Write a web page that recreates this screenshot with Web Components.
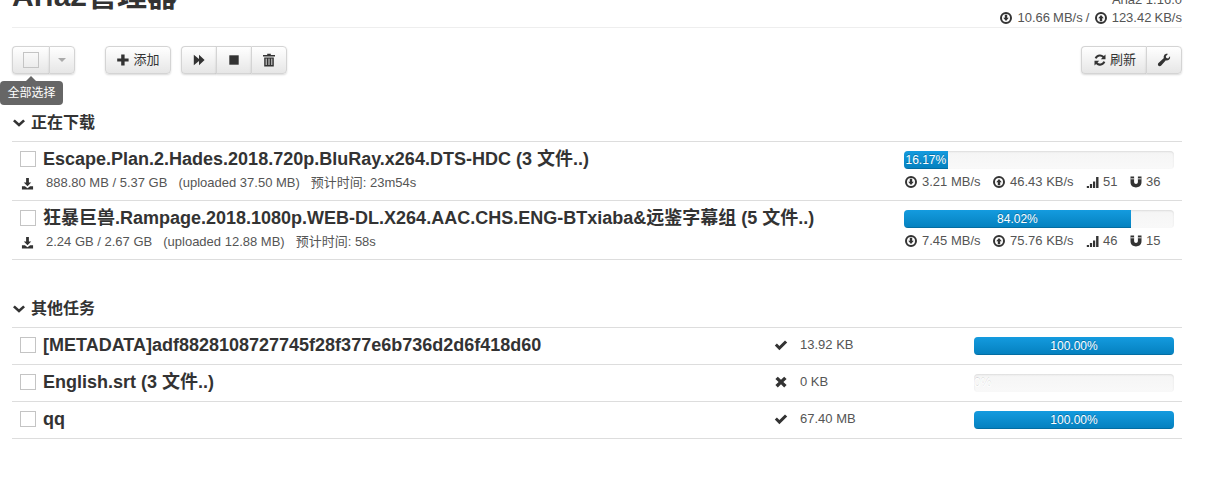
<!DOCTYPE html>
<html lang="zh">
<head>
<meta charset="utf-8">
<title>Aria2管理器</title>
<style>
html, body { margin: 0; height: 492px; overflow: hidden; background: #fff; }
body { font: 13px/18px "Liberation Sans", "Noto Sans CJK SC", sans-serif; color: #333; }
</style>
</head>
<body>
<a2-app></a2-app>
<script>
const ICONS = {
    down: '<circle cx="7" cy="7" r="5" fill="none" stroke="currentColor" stroke-width="2"/><path d="M5.800 3.800h2.400v3h1.600L7 10 4.200 6.800h1.600z"/>',
    up: '<circle cx="7" cy="7" r="5" fill="none" stroke="currentColor" stroke-width="2"/><path d="M5.800 10.200h2.400v-3h1.600L7 4 4.200 7.200h1.600z"/>',
    download: '<path d="M5.500 1h3v5h2.500L7 10 3 6h2.500z"/><path d="M1 10h3.200L7 12l2.800-2H13v3.400H1z"/>',
    signal: '<path d="M.8 11h2.200v2H.8zM3.900 9h2.200v4H3.900zM7 6.500h2.200V13H7zM10.100 2h2.400v11h-2.400z"/>',
    magnet: '<path d="M1.500 1.500h3.600v5.600c0 2.600 3.800 2.600 3.800 0V1.500h3.600v5.800c0 6.900-11 6.900-11 0z"/><path d="M1.500 3.800h3.600M8.900 3.800h3.600" stroke="#fff" stroke-width=".8"/>',
    check: '<path d="M.8 7.600 2.900 5.500l2.500 2.500L11 2.400l2.200 2.200-7.800 7.700z"/>',
    remove: '<path d="M1.400 4 3.800 1.700 7 4.800l3.200-3.100 2.400 2.300L9.400 7l3.200 3.100-2.400 2.300L7 9.200l-3.200 3.200-2.400-2.300L4.600 7z"/>',
    plus: '<path d="M5.200 1.500h3.400v3.900h4v3.200h-4v3.900H5.200V8.600h-4V5.400h4z"/>',
    forward: '<path d="M1.800 1.700 7 6V1.700L12.600 7 7 12.300V8l-5.200 4.300z"/>',
    stop: '<path d="M2.300 2.300h9.400v9.400H2.300z"/>',
    trash: '<path d="M5.200 .8h3.600v1.100H13v1.500H1V1.900h4.200zM2.200 4.400h9.600v9H2.200z"/><path d="M4.200 5.600v6.400M7 5.600v6.400M9.800 5.600v6.400" stroke="#f2f2f2" stroke-width=".9"/>',
    refresh: '<path d="M7 1.500a5.500 5.500 0 0 1 3.900 1.600L12.500 1.500v4.700H7.800l1.700-1.700A3.500 3.500 0 0 0 3.700 5.700L1.700 5A5.500 5.500 0 0 1 7 1.500zM1.500 7.800h4.700L4.500 9.500a3.500 3.500 0 0 0 5.800-1.200l2 .7a5.500 5.500 0 0 1-9.200 1.900L1.500 12.500z"/>',
    wrench: '<path d="M13 3.300c.4 1.500-.1 3-1.500 3.700-.9.500-1.800.5-2.600.2L4 12.700c-.6.600-1.900.7-2.600 0-.7-.7-.6-1.900.1-2.600l5.400-5C6.500 4.200 6.600 3.200 7.100 2.400 7.900 1.100 9.400.600 10.900 1L8.800 3.200l.5 1.800 1.800.5z"/>',
    chevron: '<path d="M1 5.200 2.800 3.400 7 7.200l4.200-3.800L13 5.200 7 10.800z"/>'
};

class A2Icon extends HTMLElement {
    connectedCallback() {
        const size = this.getAttribute('size') || 14;
        this.attachShadow({ mode: 'open' }).innerHTML = `
            <style>
                :host { display: inline-flex; width: ${size}px; height: ${size}px; flex: none; }
                svg { width: 100%; height: 100%; fill: currentColor; }
            </style>
            <svg viewBox="0 0 14 14">${ICONS[this.getAttribute('name')]}</svg>`;
    }
}
customElements.define('a2-icon', A2Icon);

class A2Btn extends HTMLElement {
    constructor() {
        super();
        this.attachShadow({ mode: 'open' }).innerHTML = `
            <style>
                :host {
                    display: flex; align-items: center; justify-content: center; gap: 3px;
                    position: relative;
                    box-sizing: border-box; height: 28px;
                    border: 1px solid #d4d4d4; border-right-width: 0;
                    background: linear-gradient(#fff, #e6e6e6);
                    box-shadow: inset 0 1px 0 rgba(255,255,255,.2), 0 1px 2px rgba(0,0,0,.15);
                    color: #333; font-size: 13px;
                }
                :host(:first-child) { border-radius: 4px 0 0 4px; }
                :host(:last-child) { border-radius: 0 4px 4px 0; border-right-width: 1px; }
                :host(:only-child) { border-radius: 4px; }
            </style>
            <slot></slot>`;
    }
}
customElements.define('a2-btn', A2Btn);

class A2Group extends HTMLElement {
    constructor() {
        super();
        this.attachShadow({ mode: 'open' }).innerHTML = `
            <style>:host { display: flex; flex: none; }</style>
            <slot></slot>`;
    }
}
customElements.define('a2-group', A2Group);

class A2Check extends HTMLElement {
    constructor() {
        super();
        this.attachShadow({ mode: 'open' }).innerHTML = `
            <style>
                :host { display: block; box-sizing: border-box; width: 16px; height: 16px; flex: none;
                    border: 1px solid #c4c4c4; background: transparent; }
            </style>`;
    }
}
customElements.define('a2-check', A2Check);

class A2Tooltip extends HTMLElement {
    constructor() {
        super();
        this.attachShadow({ mode: 'open' }).innerHTML = `
            <style>
                :host { position: absolute; left: -13px; top: 29px; z-index: 2; display: block; }
                .arrow { width: 0; height: 0; margin-left: 26px; border: 5px solid transparent; border-top: 0;
                    border-bottom-color: #666; }
                .inner { box-sizing: border-box; width: 63px; height: 24px; border-radius: 4px; background: #666;
                    color: #fff; font-size: 12px; line-height: 24px; text-align: center; white-space: nowrap; }
            </style>
            <div class="arrow"></div>
            <div class="inner"><slot></slot></div>`;
    }
}
customElements.define('a2-tooltip', A2Tooltip);

class A2Progress extends HTMLElement {
    connectedCallback() {
        const value = parseFloat(this.getAttribute('value'));
        const label = this.getAttribute('label');
        const ghost = value === 0;
        this.attachShadow({ mode: 'open' }).innerHTML = `
            <style>
                :host { display: block; height: 18px; }
                .track { height: 18px; border-radius: 4px; overflow: hidden;
                    background: linear-gradient(#f5f5f5, #f9f9f9);
                    box-shadow: inset 0 1px 2px rgba(0,0,0,.1); }
                .bar { height: 18px; width: ${value}%; min-width: ${ghost ? 16 : 0}px; text-align: center;
                    color: #fff; font-size: 12px; line-height: 18px;
                    text-shadow: 0 -1px 0 rgba(0,0,0,${ghost ? '.12' : '.25'}); white-space: nowrap;
                    background: ${ghost ? 'none' : 'linear-gradient(#149bdf, #0480be)'};
                    box-shadow: ${ghost ? 'none' : 'inset 0 -1px 0 rgba(0,0,0,.15)'}; }
            </style>
            <div class="track"><div class="bar">${label}</div></div>`;
    }
}
customElements.define('a2-progress', A2Progress);

class A2Section extends HTMLElement {
    constructor() {
        super();
        this.attachShadow({ mode: 'open' }).innerHTML = `
            <style>
                :host { display: block; }
                h4 { display: flex; align-items: center; gap: 5px; margin: 0; height: 28px; padding-bottom: 4px;
                    font-size: 16px; line-height: 20px; font-weight: bold; color: #333; }
                .rows { border-top: 1px solid #ddd; }
            </style>
            <h4><a2-icon name="chevron" size="14"></a2-icon><span></span></h4>
            <div class="rows"><slot></slot></div>`;
    }
    connectedCallback() {
        this.shadowRoot.querySelector('span').textContent = this.getAttribute('heading');
    }
}
customElements.define('a2-section', A2Section);

class A2Task extends HTMLElement {
    connectedCallback() {
        const d = this.dataset;
        this.attachShadow({ mode: 'open' }).innerHTML = `
            <style>
                :host { display: grid; grid-template-columns: 1fr 270px; box-sizing: border-box;
                    height: 59px; padding: 9px 8px 0; border-bottom: 1px solid #ddd; color: #555; }
                .title { display: flex; align-items: center; gap: 7px; height: 18px; margin-top: -1px; }
                b { font-size: 18px; line-height: 18px; color: #333; white-space: nowrap; }
                .meta { display: flex; align-items: center; height: 18px; margin-top: 6px; padding-left: 1px; white-space: nowrap; }
                .meta a2-icon { margin-right: 12px; color: #333; }
                .meta span + span { margin-left: 11px; }
                .stats { display: grid; grid-template-columns: 88px 94px 43px 1fr; height: 18px; margin-top: 4px; white-space: nowrap; }
                .stats div { display: flex; align-items: center; gap: 4px; }
                .stats div:nth-child(n+3) { gap: 3px; }
                .stats a2-icon { color: #333; }
            </style>
            <div>
                <div class="title"><a2-check></a2-check><b>${d.name}</b></div>
                <div class="meta"><a2-icon name="download" size="13"></a2-icon><span>${d.size}</span><span>(uploaded ${d.sent})</span><span>预计时间: ${d.eta}</span></div>
            </div>
            <div>
                <a2-progress value="${d.pct}" label="${d.label}"></a2-progress>
                <div class="stats">
                    <div><a2-icon name="down"></a2-icon>${d.down}</div>
                    <div><a2-icon name="up"></a2-icon>${d.up}</div>
                    <div><a2-icon name="signal"></a2-icon>${d.seeds}</div>
                    <div><a2-icon name="magnet"></a2-icon>${d.peers}</div>
                </div>
            </div>`;
    }
}
customElements.define('a2-task', A2Task);

class A2Done extends HTMLElement {
    connectedCallback() {
        const d = this.dataset;
        this.attachShadow({ mode: 'open' }).innerHTML = `
            <style>
                :host { display: grid; grid-template-columns: 755px 199px 200px; align-items: center; box-sizing: border-box;
                    height: 37px; padding: 0 8px; border-bottom: 1px solid #ddd; color: #555; }
                .title { display: flex; align-items: center; gap: 7px; margin-top: -2px; }
                b { font-size: 18px; line-height: 18px; color: #333; white-space: nowrap; }
                .state { display: flex; align-items: center; gap: 12px; white-space: nowrap; margin: -2px 0 0 -1px; }
                .state a2-icon { color: #333; }
            </style>
            <div class="title"><a2-check></a2-check><b>${d.name}</b></div>
            <div class="state"><a2-icon name="${d.icon}"></a2-icon>${d.size}</div>
            <a2-progress value="${d.pct}" label="${d.label}"></a2-progress>`;
    }
}
customElements.define('a2-done', A2Done);

class A2App extends HTMLElement {
    constructor() {
        super();
        this.attachShadow({ mode: 'open' }).innerHTML = `
            <style>
                :host { display: block; box-sizing: border-box; width: 1170px; margin: -12px 0 0 12px; }
                header { display: flex; justify-content: space-between; height: 39px; border-bottom: 1px solid #eee; }
                h1 { margin: -10px 0 0; font-size: 30px; line-height: 36px; font-weight: bold; color: #333; white-space: nowrap; }
                .ver { text-align: right; color: #555; line-height: 18px; padding-top: 3px; }
                .speed { display: flex; align-items: center; justify-content: flex-end; gap: 1px; white-space: pre; word-spacing: -.5px; }
                .speed a2-icon { color: #333; }
                .toolbar { display: flex; align-items: flex-start; height: 28px; margin-top: 18px; }
                .add { margin-left: 30px; }
                .ctl { margin-left: 10px; }
                .spacer { flex: 1; }
                .s1 { margin-top: 35px; }
                .s2 { margin-top: 35px; }
                .w37 { width: 37px; }
                .w26 { width: 26px; }
                .w66 { width: 66px; }
                .w35 { width: 35px; }
                .w36 { width: 36px; }
                .w65 { width: 65px; padding-left: 1px; }
                .caret { width: 0; height: 0; border: 4px solid transparent; border-bottom: 0; border-top-color: #aaa; }
            </style>
            <header>
                <h1>Aria2管理器</h1>
                <div class="ver">
                    <div>Aria2 1.16.0</div>
                    <div class="speed"><a2-icon name="down"></a2-icon> 10.66 MB/s / <a2-icon name="up"></a2-icon> 123.42 KB/s</div>
                </div>
            </header>
            <div class="toolbar">
                <a2-group>
                    <a2-btn class="w37"><a2-check></a2-check><a2-tooltip>全部选择</a2-tooltip></a2-btn>
                    <a2-btn class="w26"><span class="caret"></span></a2-btn>
                </a2-group>
                <a2-group class="add">
                    <a2-btn class="w66"><a2-icon name="plus"></a2-icon>添加</a2-btn>
                </a2-group>
                <a2-group class="ctl">
                    <a2-btn class="w35"><a2-icon name="forward"></a2-icon></a2-btn>
                    <a2-btn class="w35"><a2-icon name="stop"></a2-icon></a2-btn>
                    <a2-btn class="w36"><a2-icon name="trash"></a2-icon></a2-btn>
                </a2-group>
                <div class="spacer"></div>
                <a2-group>
                    <a2-btn class="w65"><a2-icon name="refresh"></a2-icon>刷新</a2-btn>
                    <a2-btn class="w36"><a2-icon name="wrench"></a2-icon></a2-btn>
                </a2-group>
            </div>
            <a2-section class="s1" heading="正在下载">
                <a2-task data-name="Escape.Plan.2.Hades.2018.720p.BluRay.x264.DTS-HDC (3 文件..)" data-size="888.80 MB / 5.37 GB" data-sent="37.50 MB" data-eta="23m54s" data-pct="16.17" data-label="16.17%" data-down="3.21 MB/s" data-up="46.43 KB/s" data-seeds="51" data-peers="36"></a2-task>
                <a2-task data-name="狂暴巨兽.Rampage.2018.1080p.WEB-DL.X264.AAC.CHS.ENG-BTxiaba&amp;远鉴字幕组 (5 文件..)" data-size="2.24 GB / 2.67 GB" data-sent="12.88 MB" data-eta="58s" data-pct="84.02" data-label="84.02%" data-down="7.45 MB/s" data-up="75.76 KB/s" data-seeds="46" data-peers="15"></a2-task>
            </a2-section>
            <a2-section class="s2" heading="其他任务">
                <a2-done data-name="[METADATA]adf8828108727745f28f377e6b736d2d6f418d60" data-icon="check" data-size="13.92 KB" data-pct="100" data-label="100.00%"></a2-done>
                <a2-done data-name="English.srt (3 文件..)" data-icon="remove" data-size="0 KB" data-pct="0" data-label="0%"></a2-done>
                <a2-done data-name="qq" data-icon="check" data-size="67.40 MB" data-pct="100" data-label="100.00%"></a2-done>
            </a2-section>`;
    }
}
customElements.define('a2-app', A2App);
</script>
</body>
</html>
